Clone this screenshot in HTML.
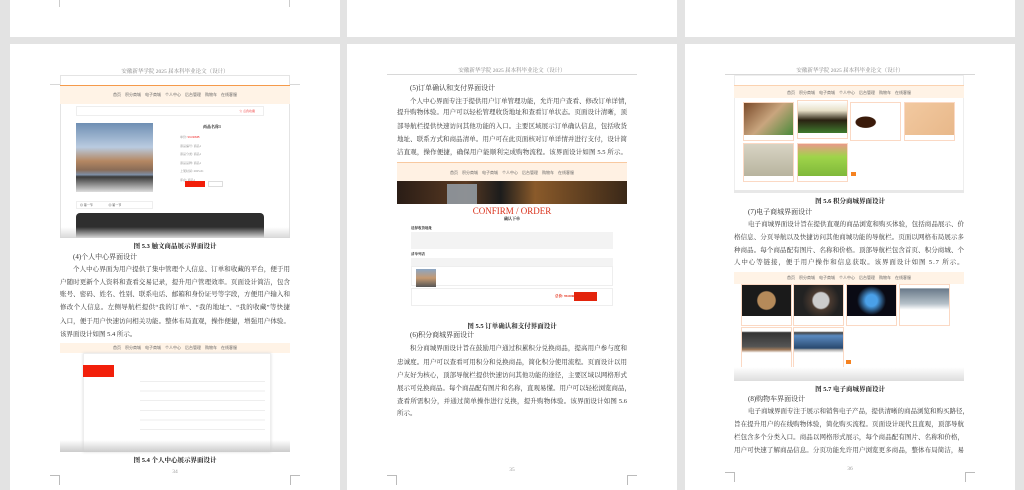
<!DOCTYPE html>
<html><head><meta charset="utf-8"><style>
*{margin:0;padding:0;box-sizing:border-box}
body{width:1024px;height:490px;background:#e3e3e3;position:relative;overflow:hidden;font-family:"Liberation Serif","Noto Serif CJK SC",serif;color:#222}
.pg{position:absolute;background:#fff}
.a{position:absolute}
.hd{position:absolute;font-size:5.5px;color:#888;text-align:center;width:330px;left:0}
.hl{position:absolute;height:1px;background:#d8d8d8}
.l{position:absolute;font-size:6.5px;line-height:12px;height:12px;text-align:justify;text-align-last:justify;white-space:nowrap;color:#333;overflow:visible}
.h{position:absolute;font-size:7px;line-height:12px;white-space:nowrap;color:#333}
.cap{position:absolute;font-size:6.5px;font-weight:bold;text-align:center;width:330px;left:0;color:#222}
.pn{position:absolute;font-size:5.5px;color:#999;text-align:center;width:330px;left:0}
.cm{position:absolute;width:10px;height:10px;border-color:#bbb;border-style:solid;border-width:0}
.nav{position:absolute;background:#fff3e6;font-size:4px;color:#666;text-align:center;font-family:"Liberation Sans","Noto Sans CJK SC",sans-serif}
.card{position:absolute;border:1px solid #fbd9c4;background:#fff}
</style></head><body>
<div class="pg" style="left:10px;top:0;width:330px;height:37px"></div>
<div class="pg" style="left:347px;top:0;width:330px;height:37px"></div>
<div class="pg" style="left:685px;top:0;width:330px;height:37px"></div>
<div class="a" style="left:59px;top:0;width:1px;height:7px;background:#ccc"></div>
<div class="a" style="left:289px;top:0;width:1px;height:7px;background:#ccc"></div>

<!-- PAGE 1 -->
<div class="pg" style="left:10px;top:44px;width:330px;height:446px">
<div class="hd" style="top:23px">安徽新华学院 2025 届本科毕业论文（设计）</div>
<div class="hl" style="left:40px;width:250px;top:40px"></div>
<div class="a" style="left:50px;top:31px;width:230px;height:163px;background:#fff;border:1px solid #e4e4e4"></div>
<div class="nav" style="left:50px;top:41px;width:230px;height:19px;border-top:1px solid #f59a4a;line-height:17px">首页　积分商城　电子商城　个人中心　后台管理　购物车　在线客服</div>
<div class="a" style="left:66px;top:62px;width:188px;height:10px;border:1px solid #eee;font-size:3px;color:#e33;text-align:right;padding-right:8px;line-height:9px">☆ 点我收藏</div>
<div class="a" style="left:66px;top:79px;width:77px;height:69px;background:linear-gradient(#6f8fb3 0%,#b9cbe0 35%,#b58863 55%,#8a6c57 68%,#7d8ea5 75%,#3a3a3a 78%,#ddd 100%)"></div>
<div class="a" style="left:193px;top:80px;font-size:4px;font-weight:bold">商品名称1</div>
<div class="a" style="left:170px;top:89px;width:40px;height:40px;font-size:3px;color:#888;line-height:8.5px">单价: <span style="color:#e22">99.0RMB</span><br>商品编号: 商品1<br>商品分类: 商品1<br>商品品牌: 商品1<br>上架时间: 2025-01<br>库存: 商品1</div>
<div class="a" style="left:175px;top:137px;width:20px;height:6px;background:#f21f0a"></div>
<div class="a" style="left:198px;top:137px;width:15px;height:6px;border:1px solid #ddd"></div>
<div class="a" style="left:66px;top:157px;width:77px;height:8px;border:1px solid #eee;font-size:3px;line-height:7px;padding-left:3px">◎ 第一节 　　　　　◎ 第一节</div>
<div class="a" style="left:66px;top:169px;width:188px;height:25px;background:#2e2e2e;border-radius:4px 4px 0 0"></div>
<div class="a" style="left:50px;top:183px;width:230px;height:11px;background:linear-gradient(rgba(255,255,255,0),#d8d8d8)"></div>
<div class="cap" style="top:197px">图 5.3 触文商品展示界面设计</div>
<div class="h" style="left:63px;top:207px">(4)个人中心界面设计</div>
<div class="l" style="left:63px;width:217px;top:220px">个人中心界面为用户提供了集中管理个人信息、订单和收藏的平台，便于用</div>
<div class="l" style="left:50px;width:230px;top:233px">户随时更新个人资料和查看交易记录，提升用户管理效率。页面设计简洁，包含</div>
<div class="l" style="left:50px;width:230px;top:245px">账号、密码、姓名、性别、联系电话、邮箱和身份证号等字段，方便用户输入和</div>
<div class="l" style="left:50px;width:230px;top:258px">修改个人信息。左侧导航栏提供“我的订单”、“我的地址”、“我的收藏”等快捷</div>
<div class="l" style="left:50px;width:230px;top:272px">入口，便于用户快速访问相关功能。整体布局直观，操作便捷，增强用户体验。</div>
<div class="h" style="left:50px;top:285px;font-size:6.5px">该界面设计如图 5.4 所示。</div>
<div class="a" style="left:50px;top:299px;width:230px;height:109px;background:#fff"></div>
<div class="nav" style="left:50px;top:299px;width:230px;height:10px;line-height:10px">首页　积分商城　电子商城　个人中心　后台管理　购物车　在线客服</div>
<div class="a" style="left:73px;top:309px;width:188px;height:99px;border:1px solid #eee;box-shadow:0 0 3px #ddd"></div>
<div class="a" style="left:73px;top:321px;width:31px;height:12px;background:#f21f0a"></div>
<div class="a" style="left:130px;top:333px;width:125px;height:60px;background:repeating-linear-gradient(#fff 0,#fff 4px,#eee 4px,#eee 5px,#fff 5px,#fff 9.6px)"></div>
<div class="a" style="left:50px;top:396px;width:230px;height:12px;background:linear-gradient(rgba(255,255,255,0),#ccc)"></div>
<div class="cap" style="top:411px">图 5.4 个人中心展示界面设计</div>
<div class="pn" style="top:425px">34</div>
<div class="cm" style="left:40px;top:431px;border-top-width:1px;border-right-width:1px"></div>
<div class="cm" style="left:280px;top:431px;border-top-width:1px;border-left-width:1px"></div>
</div>

<!-- PAGE 2 -->
<div class="pg" style="left:347px;top:44px;width:330px;height:446px">
<div class="hd" style="top:22px">安徽新华学院 2025 届本科毕业论文（设计）</div>
<div class="hl" style="left:40px;width:250px;top:30px"></div>
<div class="h" style="left:63px;top:38px">(5)订单确认和支付界面设计</div>
<div class="l" style="left:63px;width:217px;top:52px">个人中心界面专注于提供用户订单管理功能，允许用户查看、修改订单详情，</div>
<div class="l" style="left:50px;width:230px;top:63px">提升购物体验。用户可以轻松管理收货地址和查看订单状态。页面设计清晰，顶</div>
<div class="l" style="left:50px;width:230px;top:77px">部导航栏提供快速访问其他功能的入口。主要区域展示订单确认信息，包括收货</div>
<div class="l" style="left:50px;width:230px;top:90px">地址、联系方式和商品清单。用户可在此页面核对订单详情并进行支付，设计简</div>
<div class="l" style="left:50px;width:230px;top:103px">洁直观，操作便捷，确保用户能顺利完成购物流程。该界面设计如图 5.5 所示。</div>
<div class="nav" style="left:50px;top:118px;width:230px;height:19px;line-height:19px;background:#fff1e3;border-top:1px solid #f8c9a0">首页　积分商城　电子商城　个人中心　后台管理　购物车　在线客服</div>
<div class="a" style="left:50px;top:137px;width:230px;height:23px;background:linear-gradient(90deg,#2a1d16 0%,#5a3a22 30%,#1c1c1c 45%,#8a5a2a 60%,#3a2818 100%)"></div>
<div class="a" style="left:100px;top:140px;width:30px;height:20px;background:#9aa6b2;opacity:.8"></div>
<div class="a" style="left:0;width:330px;top:162px;text-align:center;font-family:'Liberation Serif',serif;font-size:9px;color:#d9301a">CONFIRM / ORDER</div>
<div class="a" style="left:0;width:330px;top:172px;text-align:center;font-size:4px;font-weight:bold">确认下单</div>
<div class="a" style="left:64px;top:182px;font-size:3.5px;font-weight:bold">选择收货地址</div>
<div class="a" style="left:64px;top:188px;width:202px;height:17px;background:#f3f3f3"></div>
<div class="a" style="left:64px;top:208px;font-size:3.5px;font-weight:bold">清单列表</div>
<div class="a" style="left:64px;top:214px;width:202px;height:8px;background:#f3f3f3"></div>
<div class="a" style="left:64px;top:222px;width:202px;height:20px;border:1px solid #eee"></div>
<div class="a" style="left:69px;top:225px;width:20px;height:18px;background:linear-gradient(#8ba6c4,#c59a72,#555)"></div>
<div class="a" style="left:64px;top:244px;width:202px;height:18px;border:1px solid #eee"></div>
<div class="a" style="left:227px;top:248px;width:23px;height:9px;background:#e3240c"></div>
<div class="a" style="left:208px;top:250px;font-size:3.5px;color:#e3240c;font-weight:bold">总价: 99.00RMB</div>
<div class="cap" style="top:277px">图 5.5 订单确认和支付界面设计</div>
<div class="h" style="left:63px;top:285px">(6)积分商城界面设计</div>
<div class="l" style="left:63px;width:217px;top:299px">积分商城界面设计旨在鼓励用户通过积累积分兑换商品，提高用户参与度和</div>
<div class="l" style="left:50px;width:230px;top:313px">忠诚度。用户可以查看可用积分和兑换商品，简化积分使用流程。页面设计以用</div>
<div class="l" style="left:50px;width:230px;top:326px">户友好为核心，顶部导航栏提供快速访问其他功能的途径，主要区域以网格形式</div>
<div class="l" style="left:50px;width:230px;top:339px">展示可兑换商品。每个商品配有图片和名称，直观易懂。用户可以轻松浏览商品，</div>
<div class="l" style="left:50px;width:230px;top:352px">查看所需积分，并通过简单操作进行兑换，提升购物体验。该界面设计如图 5.6</div>
<div class="h" style="left:50px;top:364px;font-size:6.5px">所示。</div>
<div class="pn" style="top:423px">35</div>
<div class="cm" style="left:40px;top:431px;border-top-width:1px;border-right-width:1px"></div>
<div class="cm" style="left:280px;top:431px;border-top-width:1px;border-left-width:1px"></div>
</div>

<!-- PAGE 3 -->
<div class="pg" style="left:685px;top:44px;width:330px;height:446px">
<div class="hd" style="top:22px">安徽新华学院 2025 届本科毕业论文（设计）</div>
<div class="hl" style="left:40px;width:250px;top:30px"></div>
<div class="a" style="left:49px;top:31px;width:230px;height:117px;border:1px solid #eee"></div>
<div class="nav" style="left:49px;top:41px;width:230px;height:13px;line-height:13px;border-top:1px solid #fbd2b0">首页　积分商城　电子商城　个人中心　后台管理　购物车　在线客服</div>
<div class="card" style="left:58px;top:58px;width:51px;height:39px"><div style="height:32px;background:linear-gradient(135deg,#7a4a2a,#c9a57e 50%,#4a8a3a)"></div></div>
<div class="card" style="left:112px;top:56px;width:51px;height:39px"><div style="height:32px;background:linear-gradient(#fff 0,#e7e0c8 30%,#2a2212 60%,#3f7a2e 100%)"></div></div>
<div class="card" style="left:165px;top:58px;width:51px;height:39px"><div style="height:32px;background:radial-gradient(ellipse at 30% 60%,#3a1a0a 20%,#fff 22%),#fff"></div></div>
<div class="card" style="left:219px;top:58px;width:51px;height:39px"><div style="height:32px;background:linear-gradient(135deg,#f2c9a0,#e8b88a)"></div></div>
<div class="card" style="left:58px;top:99px;width:51px;height:39px"><div style="height:32px;background:linear-gradient(#d8d4c4,#b8b49e)"></div></div>
<div class="card" style="left:112px;top:99px;width:51px;height:39px"><div style="height:32px;background:linear-gradient(#e89a8a,#9fd44a 40%,#7fb83a)"></div></div>
<div class="a" style="left:166px;top:128px;width:5px;height:4px;background:#f58220"></div>
<div class="a" style="left:49px;top:146px;width:230px;height:3px;background:#e8e8e8"></div>
<div class="cap" style="top:152px">图 5.6 积分商城界面设计</div>
<div class="h" style="left:63px;top:162px">(7)电子商城界面设计</div>
<div class="l" style="left:63px;width:216px;top:175px">电子商城界面设计旨在提供直观的商品浏览和购买体验，包括商品展示、价</div>
<div class="l" style="left:49px;width:230px;top:188px">格信息、分页导航以及快捷访问其他商城功能的导航栏。页面以网格布局展示多</div>
<div class="l" style="left:49px;width:230px;top:201px">种商品。每个商品配有图片、名称和价格。顶部导航栏包含首页、积分商城、个</div>
<div class="h" style="left:49px;top:213px;font-size:6.5px;letter-spacing:0.9px">人中心等链接，便于用户操作和信息获取。该界面设计如图 5.7 所示。</div>
<div class="nav" style="left:49px;top:228px;width:230px;height:12px;line-height:12px">首页　积分商城　电子商城　个人中心　后台管理　购物车　在线客服</div>
<div class="card" style="left:56px;top:240px;width:51px;height:42px"><div style="height:31px;background:radial-gradient(circle at 50% 50%,#b58a5a 30%,#1a1a1a 34%)"></div></div>
<div class="card" style="left:108px;top:240px;width:51px;height:42px"><div style="height:31px;background:radial-gradient(circle at 55% 50%,#ccc 25%,#4a3a30 30%,#222 60%)"></div></div>
<div class="card" style="left:161px;top:240px;width:51px;height:42px"><div style="height:31px;background:radial-gradient(circle at 50% 50%,#4aa0e8 20%,#0a0a14 50%)"></div></div>
<div class="card" style="left:214px;top:240px;width:51px;height:42px"><div style="height:31px;background:linear-gradient(#fff 10%,#6a7a8a 12%,#b5c0c8 60%,#fff 80%)"></div></div>
<div class="card" style="left:56px;top:283px;width:51px;height:42px"><div style="height:31px;background:linear-gradient(#fff 10%,#333 15%,#555 60%,#a07a5a 70%,#fff 80%)"></div></div>
<div class="card" style="left:108px;top:283px;width:51px;height:42px"><div style="height:31px;background:linear-gradient(#fff 10%,#444 15%,#5a8ac0 25%,#2a4a70 65%,#aaa 70%,#fff 80%)"></div></div>
<div class="a" style="left:161px;top:316px;width:5px;height:4px;background:#f58220"></div>
<div class="a" style="left:49px;top:323px;width:230px;height:14px;background:linear-gradient(#fff,#ddd)"></div>
<div class="cap" style="top:340px">图 5.7 电子商城界面设计</div>
<div class="h" style="left:63px;top:349px">(8)购物车界面设计</div>
<div class="l" style="left:63px;width:216px;top:362px">电子商城界面专注于展示和销售电子产品，提供清晰的商品浏览和购买路径，</div>
<div class="l" style="left:49px;width:230px;top:375px">旨在提升用户的在线购物体验，简化购买流程。页面设计现代且直观，顶部导航</div>
<div class="l" style="left:49px;width:230px;top:388px">栏包含多个分类入口。商品以网格形式展示，每个商品配有图片、名称和价格，</div>
<div class="l" style="left:49px;width:230px;top:401px">用户可快速了解商品信息。分页功能允许用户浏览更多商品，整体布局简洁，易</div>
<div class="pn" style="top:422px">36</div>
<div class="cm" style="left:40px;top:428px;border-top-width:1px;border-right-width:1px"></div>
<div class="cm" style="left:280px;top:428px;border-top-width:1px;border-left-width:1px"></div>
</div>
</body></html>
